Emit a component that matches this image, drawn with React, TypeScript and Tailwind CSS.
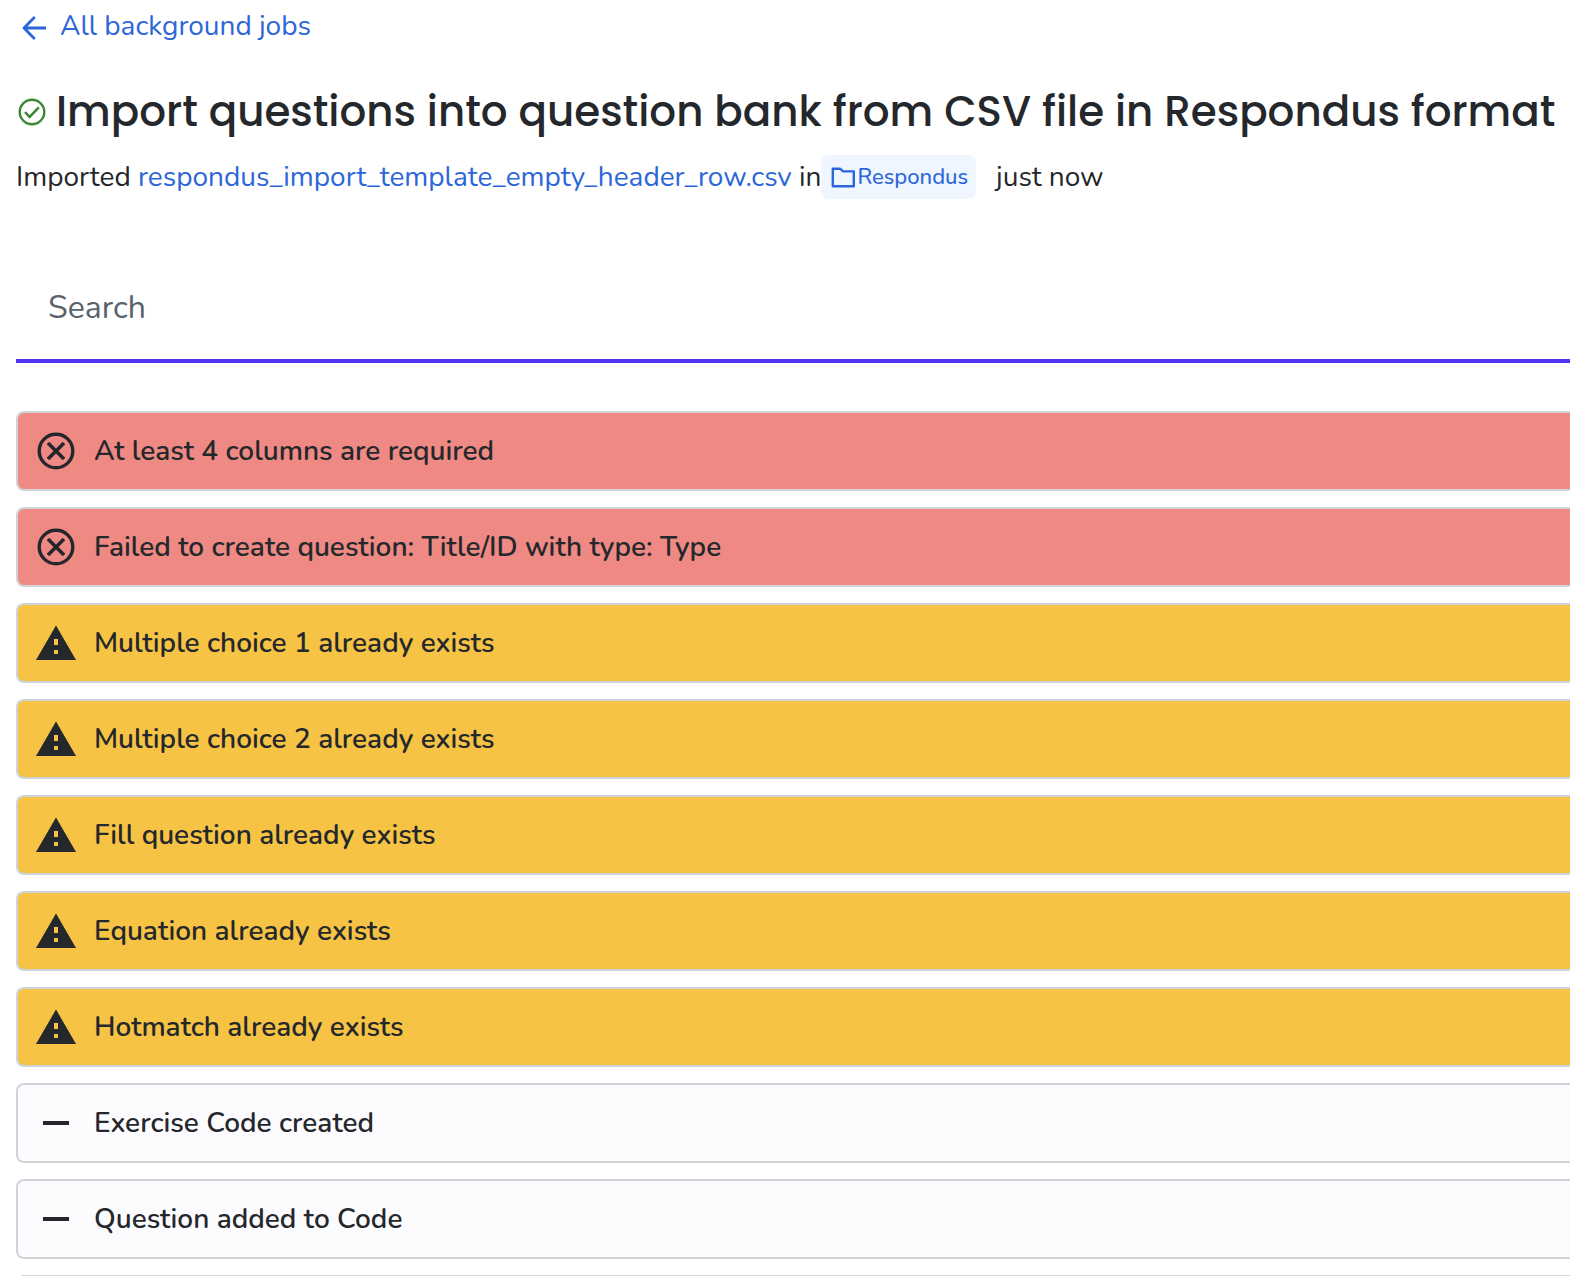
import type { ReactNode } from 'react';
import clsx from 'clsx';

type LogLevel = 'error' | 'warning' | 'info';

interface LogEntry {
  id: number;
  level: LogLevel;
  message: string;
}

const entries: LogEntry[] = [
  { id: 1, level: 'error', message: 'At least 4 columns are required' },
  { id: 2, level: 'error', message: 'Failed to create question: Title/ID with type: Type' },
  { id: 3, level: 'warning', message: 'Multiple choice 1 already exists' },
  { id: 4, level: 'warning', message: 'Multiple choice 2 already exists' },
  { id: 5, level: 'warning', message: 'Fill question already exists' },
  { id: 6, level: 'warning', message: 'Equation already exists' },
  { id: 7, level: 'warning', message: 'Hotmatch already exists' },
  { id: 8, level: 'info', message: 'Exercise Code created' },
  { id: 9, level: 'info', message: 'Question added to Code' },
];

const levelStyles: Record<LogLevel, string> = {
  error: 'bg-[#ef8984]',
  warning: 'bg-[#f6c344]',
  info: 'bg-[#fcfcfe]',
};

const levelIcons: Record<LogLevel, ReactNode> = {
  error: (
    <svg viewBox="0 0 40 40" className="size-10 shrink-0" fill="none" stroke="currentColor" aria-hidden="true">
      <circle cx="20" cy="20" r="16.8" strokeWidth="3.4" />
      <path d="M12 12l16 16M28 12L12 28" strokeWidth="3.6" />
    </svg>
  ),
  warning: (
    <svg viewBox="0 0 40 40" className="size-10 shrink-0" fill="currentColor" aria-hidden="true">
      <path fillRule="evenodd" d="M20 2.5L40 37H0zM18 16v6h4v-6zM18 27v4h4v-4z" />
    </svg>
  ),
  info: (
    <svg viewBox="0 0 40 40" className="size-10 shrink-0" fill="currentColor" aria-hidden="true">
      <path d="M7 18h26v4H7z" />
    </svg>
  ),
};

function LogRow({ entry }: { entry: LogEntry }) {
  return (
    <li
      className={clsx(
        'flex h-20 items-center gap-[18px] rounded-l-lg border-2 border-r-0 border-[#cfd4d9] px-[18px] font-semibold',
        levelStyles[entry.level]
      )}
    >
      {levelIcons[entry.level]}
      <span>{entry.message}</span>
    </li>
  );
}

export default function App() {
  return (
    <main className="h-screen overflow-hidden bg-white pl-4 font-['Nunito','Open_Sans',sans-serif] text-[28px] leading-9 text-[#24282c]">
      <nav className="flex pt-2">
        <a href="#jobs" className="flex items-center gap-2 text-[#2c66d9]">
          <svg viewBox="0 0 36 36" className="size-9" fill="none" stroke="currentColor" strokeWidth="2.8" strokeLinejoin="round" aria-hidden="true">
            <path d="M30 20H8M18.8 9L8 20l10.8 11" />
          </svg>
          All background jobs
        </a>
      </nav>

      <header className="pt-10">
        <h1 className="flex items-center gap-2 whitespace-nowrap font-['Poppins','Inter',sans-serif] text-[42px] leading-[56px] font-medium">
          <svg viewBox="0 0 32 32" className="size-8 shrink-0 text-[#3c8738]" fill="none" stroke="currentColor" aria-hidden="true">
            <circle cx="16" cy="16" r="12.3" strokeWidth="2.4" />
            <path d="M9 16.2l4.6 4.6 9.2-9.4" strokeWidth="2.6" />
          </svg>
          Import questions into question bank from CSV file in Respondus format
        </h1>
        <p className="mt-[15px] flex h-11 items-center whitespace-nowrap">
          Imported&nbsp;
          <a href="#file" className="text-[#2c66d9]">respondus_import_template_empty_header_row.csv</a>
          &nbsp;in
          <a href="#respondus" className="mr-5 flex h-11 items-center rounded-lg bg-[#eff6ff] px-2 text-[22px] font-medium text-[#2c66d9]">
            <svg viewBox="0 0 28 28" className="size-7" fill="none" stroke="currentColor" strokeWidth="2.4" strokeLinejoin="round" aria-hidden="true">
              <path d="M3.8 5.8h7.4l3 2.6h10.6v14.8h-21z" />
            </svg>
            Respondus
          </a>
          just now
        </p>
      </header>

      <input
        type="search"
        aria-label="Search"
        placeholder="Search"
        className="mt-14 block h-[108px] w-full border-b-4 border-[#4f35f0] px-8 text-[32px] outline-none placeholder:text-[#59616b]"
      />

      <ul className="mt-12 flex flex-col gap-4">
        {entries.map((entry) => (
          <LogRow key={entry.id} entry={entry} />
        ))}
        <li className="h-20 rounded-l-lg border-2 border-r-0 border-[#cfd4d9] bg-[#fcfcfe]" />
      </ul>
    </main>
  );
}
